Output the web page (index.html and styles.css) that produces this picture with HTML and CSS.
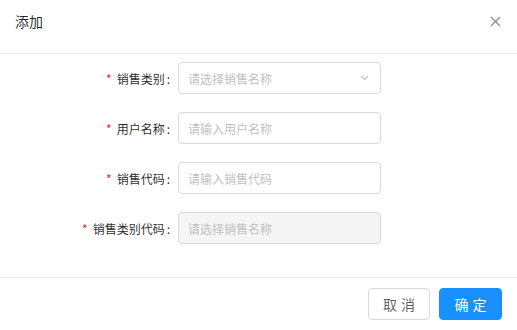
FILE: index.html
```html
<!DOCTYPE html>
<html lang="zh-CN">
<head>
    <meta charset="UTF-8">
    <title>添加</title>
    <link rel="stylesheet" href="styles.css">
</head>
<body>
    <div class="modal">
        <div class="modal-header">
            <span class="modal-title">添加</span>
            <button class="modal-close" aria-label="关闭">
                <svg width="11" height="11" viewBox="0 0 11 11"><path d="M1 1L10 10M10 1L1 10" stroke="#8c8c8c" stroke-width="1.3" fill="none"/></svg>
            </button>
        </div>

        <div class="modal-body">
            <div class="form-row">
                <label class="form-label"><span class="req">*</span>销售类别</label>
                <div class="select">
                    <span class="placeholder">请选择销售名称</span>
                    <svg class="arrow" width="9" height="6" viewBox="0 0 9 6"><path d="M1 1L4.5 4.5L8 1" stroke="#c0c0c0" stroke-width="1.1" fill="none"/></svg>
                </div>
            </div>
            <div class="form-row">
                <label class="form-label" for="user"><span class="req">*</span>用户名称</label>
                <input id="user" class="input" type="text" placeholder="请输入用户名称">
            </div>
            <div class="form-row">
                <label class="form-label" for="code"><span class="req">*</span>销售代码</label>
                <input id="code" class="input" type="text" placeholder="请输入销售代码">
            </div>
            <div class="form-row">
                <label class="form-label" for="typecode"><span class="req">*</span>销售类别代码</label>
                <input id="typecode" class="input" type="text" placeholder="请选择销售名称" disabled>
            </div>
        </div>

        <div class="modal-footer">
            <button class="btn">取消</button>
            <button class="btn btn-primary">确定</button>
        </div>
    </div>
</body>
</html>
```

FILE: styles.css
```css
* {
    box-sizing: border-box;
}
body {
    margin: 0;
    background: #fff;
    font-family: "Noto Sans CJK SC", "Noto Sans", sans-serif;
    color: rgba(0,0,0,0.85);
}
.modal {
    width: 517px;
    height: 330px;
    background: #fff;
}
.modal-header {
    height: 54px;
    padding: 0 16px 0 15px;
    display: flex;
    align-items: center;
    justify-content: space-between;
    border-bottom: 1px solid #e8e8e8;
}
.modal-title {
    font-size: 14px;
    color: rgba(0,0,0,0.85);
    margin-top: -12px;
}
.modal-close {
    border: none;
    background: none;
    padding: 0;
    margin-top: -10px;
    margin-right: 0;
    cursor: pointer;
    display: flex;
}
.modal-body {
    padding: 8px 0 33px;
    display: flex;
    flex-direction: column;
    gap: 18px;
}
.form-row {
    display: flex;
    align-items: center;
    height: 32px;
}
.form-label {
    width: 178px;
    text-align: right;
    font-size: 12px;
}
.form-label::after {
    content: ":";
    margin: 0 8px 0 2px;
}
.req {
    color: #f5222d;
    margin-right: 5px;
    font-size: 12px;
}
.input, .select {
    width: 203px;
    height: 32px;
    border: 1px solid #d9d9d9;
    border-radius: 4px;
    padding: 0 9px;
    font-size: 12px;
    font-family: inherit;
    color: rgba(0,0,0,0.85);
    background: #fff;
    outline: none;
}
.input::placeholder {
    color: #bfbfbf;
}
.input:disabled {
    background: #f5f5f5;
}
.select {
    display: flex;
    align-items: center;
    justify-content: space-between;
    padding-right: 11px;
}
.placeholder {
    color: #bfbfbf;
}
.modal-footer {
    border-top: 1px solid #e8e8e8;
    padding: 10px 15px;
    display: flex;
    justify-content: flex-end;
    gap: 9px;
}
.btn {
    height: 32px;
    width: 62px;
    border: 1px solid #d9d9d9;
    border-radius: 4px;
    background: #fff;
    font-size: 14px;
    font-family: inherit;
    color: rgba(0,0,0,0.65);
    letter-spacing: 4px;
    padding: 0 0 0 4px;
    cursor: pointer;
}
.btn-primary {
    width: 63px;
    background: #1890ff;
    border-color: #1890ff;
    color: #fff;
}
```
